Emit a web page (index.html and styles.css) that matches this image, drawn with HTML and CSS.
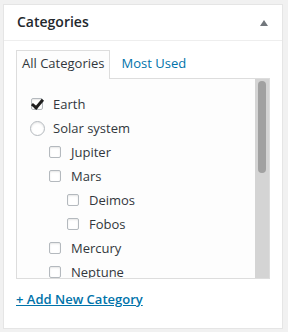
FILE: index.html
```html
<!DOCTYPE html>
<html lang="en">
<head>
    <meta charset="UTF-8">
    <title>Categories</title>
    <link rel="stylesheet" href="styles.css">
</head>
<body>
    <div class="postbox">
        <div class="postbox-header">
            <h2>Categories</h2>
            <span class="toggle-arrow"></span>
        </div>
        <div class="inside">
            <ul class="tabs">
                <li class="tab active">All Categories</li>
                <li class="tab"><a href="#">Most Used</a></li>
            </ul>
            <div class="tabs-panel">
                <ul class="cat-list">
                    <li class="lvl-0"><span class="box checked"></span>Earth</li>
                    <li class="lvl-0"><span class="radio"></span>Solar system</li>
                    <li class="lvl-1"><span class="box"></span>Jupiter</li>
                    <li class="lvl-1"><span class="box"></span>Mars</li>
                    <li class="lvl-2"><span class="box"></span>Deimos</li>
                    <li class="lvl-2"><span class="box"></span>Fobos</li>
                    <li class="lvl-1"><span class="box"></span>Mercury</li>
                    <li class="lvl-1"><span class="box"></span>Neptune</li>
                </ul>
                <div class="scrollbar"><div class="thumb"></div></div>
            </div>
            <a class="add-new" href="#">+ Add New Category</a>
        </div>
    </div>
</body>
</html>
```

FILE: styles.css
```css
body {
    margin: 0;
    background-color: #f1f1f1;
    font-family: "Open Sans", sans-serif;
    font-size: 13px;
    color: #32373c;
}
.postbox {
    margin: 4px 0 0 3px;
    width: 278px;
    height: 323px;
    background-color: #fff;
    border: 1px solid #e5e5e5;
}
.postbox-header {
    height: 36px;
    border-bottom: 1px solid #eee;
    display: flex;
    align-items: center;
    justify-content: space-between;
    padding: 0 14px 2px 13px;
    box-sizing: border-box;
}
.postbox-header h2 {
    margin: 0;
    font-size: 14px;
    font-weight: 600;
    color: #23282d;
}
.toggle-arrow {
    width: 0;
    height: 0;
    border-left: 4px solid transparent;
    border-right: 4px solid transparent;
    border-bottom: 6px solid #72777c;
    margin-top: 2px;
}
.inside {
    padding: 9px 12px 0 12px;
}
.tabs {
    list-style: none;
    margin: 0;
    padding: 0;
    display: flex;
    height: 28px;
}
.tab {
    padding: 0 5px;
    line-height: 25px;
    border: 1px solid transparent;
    border-bottom: none;
}
.tab.active {
    border-color: #ddd;
    background-color: #fdfdfd;
    height: 28px;
    position: relative;
    z-index: 1;
}
.tab a {
    color: #0073aa;
    text-decoration: none;
    margin-left: 5px;
}
.tabs-panel {
    height: 199px;
    border: 1px solid #ddd;
    background-color: #fdfdfd;
    display: flex;
    overflow: hidden;
}
.cat-list {
    flex: 1;
    list-style: none;
    margin: 0;
    padding: 13px 0 0 0;
    overflow: hidden;
}
.cat-list li {
    height: 24px;
    display: flex;
    align-items: center;
}
.lvl-0 { padding-left: 14px; }
.lvl-1 { padding-left: 32px; }
.lvl-2 { padding-left: 50px; }
.box {
    width: 10px;
    height: 10px;
    border: 1px solid #b4b9be;
    border-radius: 2px;
    background-color: #fff;
    box-shadow: inset 0 1px 2px rgba(0, 0, 0, 0.1);
    margin-right: 10px;
    position: relative;
}
.box.checked::after {
    content: "";
    position: absolute;
    left: 2px;
    top: -2px;
    width: 4px;
    height: 9px;
    border-right: 3px solid #1e1e1e;
    border-bottom: 3px solid #1e1e1e;
    transform: rotate(40deg);
}
.radio {
    width: 13px;
    height: 13px;
    border: 1px solid #b4b9be;
    border-radius: 50%;
    background-color: #fff;
    box-shadow: inset 0 1px 2px rgba(0, 0, 0, 0.1);
    margin: 0 8px 0 -1px;
}
.scrollbar {
    width: 14px;
    background-color: #d4d4d4;
    padding: 2px 3px 0 3px;
    box-sizing: border-box;
}
.thumb {
    height: 92px;
    background-color: #a1a1a1;
    border-radius: 4px;
}
.add-new {
    display: inline-block;
    margin-top: 11px;
    color: #0073aa;
    font-weight: 600;
    text-decoration: underline;
}
```
